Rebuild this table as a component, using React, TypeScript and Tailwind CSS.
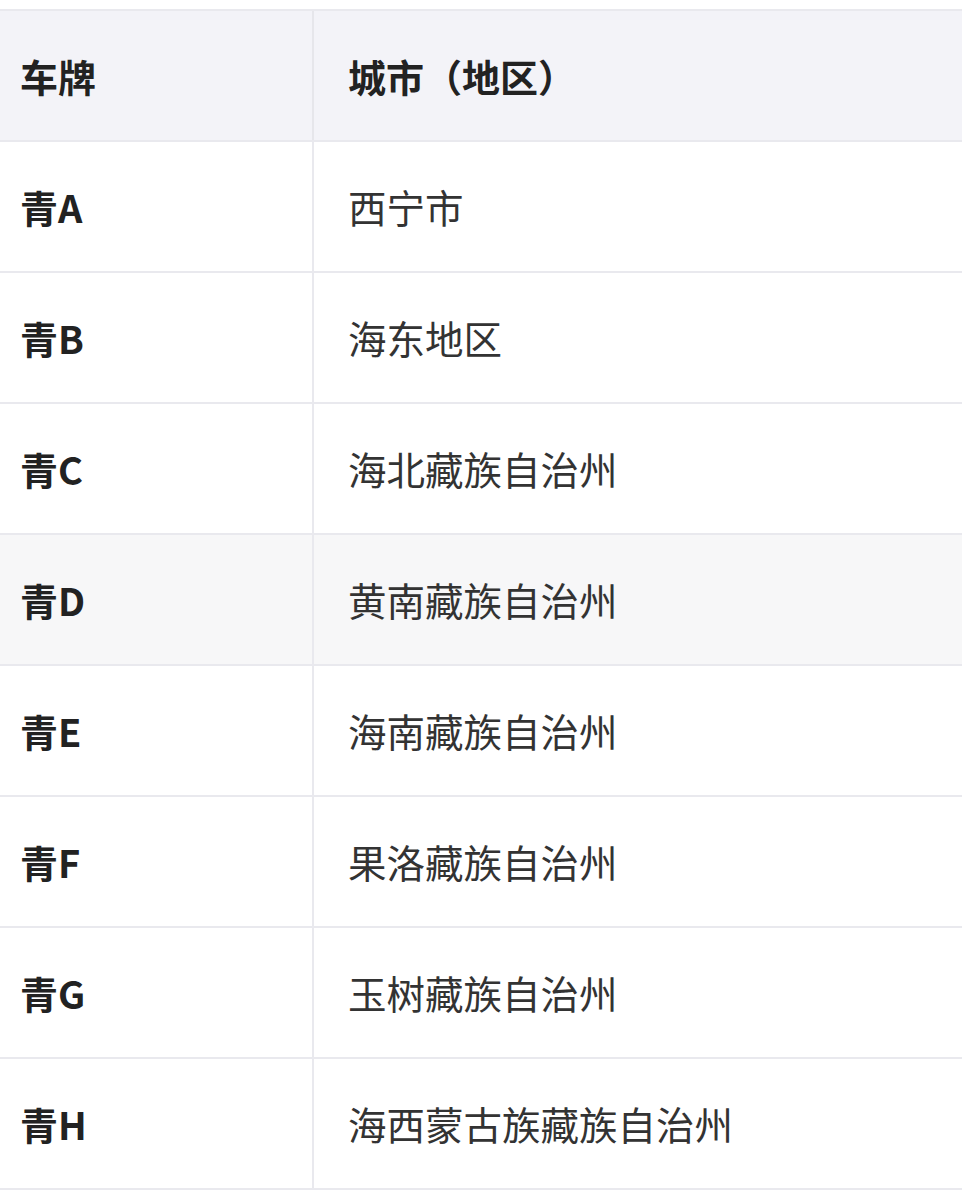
import React from 'react';

const rows: { plate: string; city: string; shaded?: boolean }[] = [
  { plate: '青A', city: '西宁市' },
  { plate: '青B', city: '海东地区' },
  { plate: '青C', city: '海北藏族自治州' },
  { plate: '青D', city: '黄南藏族自治州', shaded: true },
  { plate: '青E', city: '海南藏族自治州' },
  { plate: '青F', city: '果洛藏族自治州' },
  { plate: '青G', city: '玉树藏族自治州' },
  { plate: '青H', city: '海西蒙古族藏族自治州' },
];

const font = { fontFamily: '"Noto Sans CJK SC", "Noto Sans", sans-serif' };

export default function App() {
  return (
    <div className="w-[962px] h-[1192px] bg-white pt-[9px] overflow-hidden" style={font}>
      <div className="border-t-2 border-[#e9e9ee]">
        {/* Header */}
        <div className="grid grid-cols-[312px_1fr] h-[131px] bg-[#f3f3f8] border-b-2 border-[#e9e9ee] text-[38px] font-bold text-[#222]">
          <div className="flex items-center pl-[20px]">车牌</div>
          <div className="flex items-center pl-[34px] border-l-2 border-[#e6e6eb]">城市（地区）</div>
        </div>

        {rows.map((r) => (
          <div
            key={r.plate}
            className={`grid grid-cols-[312px_1fr] h-[131px] border-b-2 border-[#e9e9ee] text-[38.5px] ${
              r.shaded ? 'bg-[#f7f7f8]' : 'bg-white'
            }`}
          >
            <div className="flex items-center pl-[20px] font-bold text-[#222] text-[38px]">{r.plate}</div>
            <div className="flex items-center pl-[34px] border-l-2 border-[#e9e9ee] text-[#333]">{r.city}</div>
          </div>
        ))}
      </div>
    </div>
  );
}
